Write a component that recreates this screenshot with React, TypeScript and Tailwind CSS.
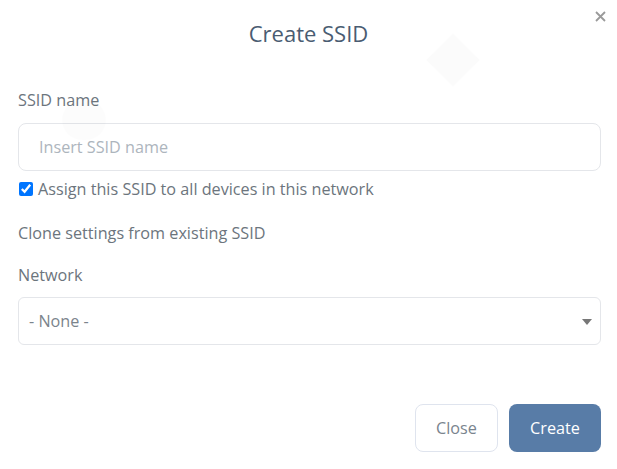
import React from "react";

export default function App() {
  return (
    <div
      className="relative w-[617px] h-[469px] bg-white overflow-hidden"
      style={{ fontFamily: '"Open Sans", "Liberation Sans", sans-serif' }}
    >
      <div className="relative h-[66px] flex items-center justify-center">
        <h2 className="text-[22px] text-[#4a5c72] font-normal leading-none">Create SSID</h2>
        <button className="absolute right-[7px] top-[6px] w-[20px] h-[20px] flex items-center justify-center text-[#9a9a9a]">
          <svg width="11" height="11" viewBox="0 0 11 11">
            <path d="M1 1L10 10M10 1L1 10" stroke="currentColor" strokeWidth="1.8" />
          </svg>
        </button>
      </div>

      <div className="pl-[18px] pr-[16px]">
        <label className="block mt-[22px] h-[24px] leading-[24px] text-[16.2px] text-[#6c757d]">SSID name</label>
        <input
          type="text"
          placeholder="Insert SSID name"
          className="mt-[11px] block w-full h-[48px] rounded-[8px] border border-[#e4e6ea] bg-transparent px-[20px] text-[16.2px] text-[#495057] placeholder:text-[#adb5bd] outline-none"
          style={{ fontFamily: '"Open Sans", "Liberation Sans", sans-serif' }}
        />
        <label className="mt-[6px] flex items-center h-[24px] text-[16.2px] text-[#6c757d]">
          <input type="checkbox" defaultChecked className="w-[14px] h-[14px] ml-[1px] mr-[5px] accent-[#0075ff]" />
          Assign this SSID to all devices in this network
        </label>
        <div className="mt-[20px] h-[24px] leading-[24px] text-[16.2px] text-[#6c757d]">Clone settings from existing SSID</div>
        <label className="block mt-[18px] h-[24px] leading-[24px] text-[16.2px] text-[#6c757d]">Network</label>
        <div className="mt-[10px] relative flex items-center w-full h-[48px] rounded-[6px] border border-[#e4e6ea] px-[10px] text-[16.2px] text-[#7b848c]">
          - None -
          <svg className="absolute right-[8px] top-[21px]" width="10" height="6" viewBox="0 0 10 6">
            <path d="M0 0H10L5 6Z" fill="#777" />
          </svg>
        </div>
        <div className="mt-[59px] flex justify-end gap-[11px]">
          <button className="w-[83px] h-[48px] rounded-[8px] border border-[#dfe4ee] bg-white text-[16.2px] text-[#7a848e]">
            Close
          </button>
          <button className="w-[92px] h-[48px] rounded-[8px] bg-[#587ca7] text-[16.2px] text-white">
            Create
          </button>
        </div>
      </div>

      <div className="pointer-events-none absolute left-[434px] top-[41px] w-[38px] h-[38px] rotate-45 bg-black/[0.015]" />
      <div className="pointer-events-none absolute left-[62px] top-[100px] w-[44px] h-[40px] rounded-full bg-black/[0.012]" />
    </div>
  );
}
